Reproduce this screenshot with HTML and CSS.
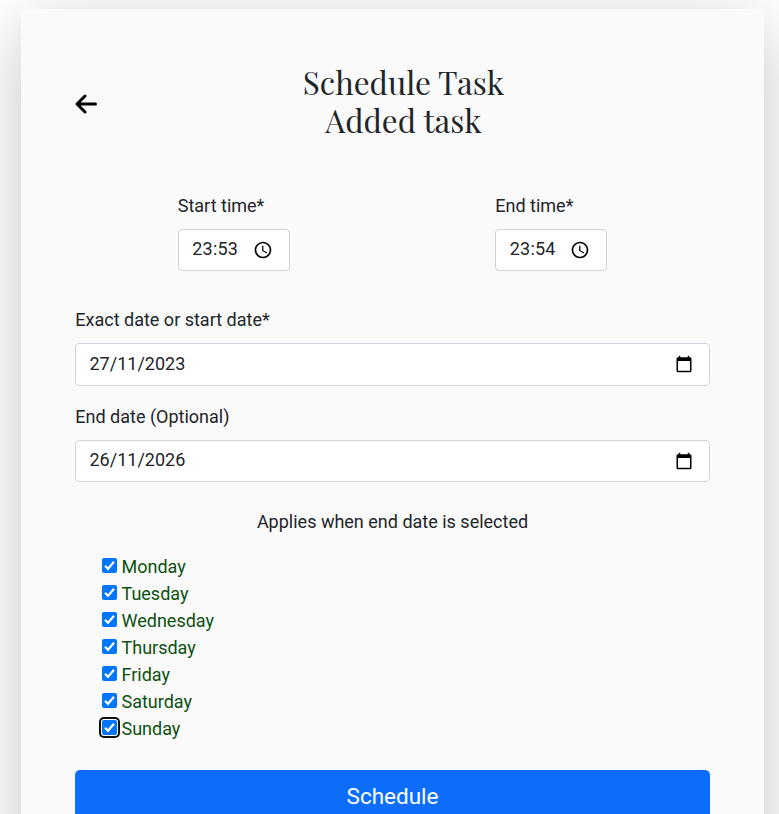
FILE: index.html
```html
<!DOCTYPE html>
<html lang="en">
<head>
<meta charset="utf-8">
<title>Schedule Task</title>
<link rel="stylesheet" href="styles.css">
</head>
<body>
<svg class="defs" aria-hidden="true">
  <symbol id="clock" viewBox="0 0 24 24"><path d="M12 2C6.500 2 2 6.500 2 12s4.500 10 10 10 10-4.500 10-10S17.500 2 12 2zm0 18c-4.400 0-8-3.600-8-8s3.600-8 8-8 8 3.600 8 8-3.600 8-8 8zM12.500 7H11v6l5.250 3.150.75-1.230-4.500-2.670z"/></symbol>
  <symbol id="calendar" viewBox="0 0 24 24"><path d="M20 3h-1V1h-2v2H7V1H5v2H4c-1.100 0-2 .9-2 2v16c0 1.100.9 2 2 2h16c1.100 0 2-.9 2-2V5c0-1.100-.9-2-2-2zm0 18H4V8h16v13z"/></symbol>
  <symbol id="check" viewBox="0 0 15 15"><path d="M3 7.800 6 10.800 12 3.800" fill="none" stroke="#fff" stroke-width="2.200"/></symbol>
</svg>
<main class="card">
  <header class="head">
    <svg class="back" viewBox="0 0 22 20"><path d="M10 2 2 10l8 8M2.500 10h18" fill="none" stroke="#000" stroke-width="3" stroke-linecap="round" stroke-linejoin="round"/></svg>
    <h1 class="title">Schedule Task<br>Added task</h1>
  </header>
  <form>
    <div class="times">
      <div class="time">
        <label>Start time*</label>
        <div class="field"><span>23:53</span><svg class="icon"><use href="#clock"/></svg></div>
      </div>
      <div class="time">
        <label>End time*</label>
        <div class="field"><span>23:54</span><svg class="icon"><use href="#clock"/></svg></div>
      </div>
    </div>
    <div class="date start">
      <label>Exact date or start date*</label>
      <div class="field"><span>27/11/2023</span><svg class="icon cal"><use href="#calendar"/></svg></div>
    </div>
    <div class="date end">
      <label>End date (Optional)</label>
      <div class="field"><span>26/11/2026</span><svg class="icon cal"><use href="#calendar"/></svg></div>
    </div>
    <p class="note">Applies when end date is selected</p>
    <div class="days">
      <div class="day"><svg class="box"><use href="#check"/></svg>Monday</div>
      <div class="day"><svg class="box"><use href="#check"/></svg>Tuesday</div>
      <div class="day"><svg class="box"><use href="#check"/></svg>Wednesday</div>
      <div class="day"><svg class="box"><use href="#check"/></svg>Thursday</div>
      <div class="day"><svg class="box"><use href="#check"/></svg>Friday</div>
      <div class="day"><svg class="box"><use href="#check"/></svg>Saturday</div>
      <div class="day"><svg class="box focus"><use href="#check"/></svg>Sunday</div>
    </div>
    <button class="submit" type="button">Schedule</button>
  </form>
</main>
</body>
</html>
```
FILE: styles.css
```css
* { box-sizing: border-box; }
html { height: 100%; overflow: hidden; }
body {
  display: flow-root;
  margin: 0;
  height: 100%;
  overflow: hidden;
  background: #fff;
  color: #212529;
  font: 18px/27px Roboto, "Liberation Sans", sans-serif;
}
.defs { display: none; }
.card {
  width: 743px;
  height: 900px;
  margin: 9px 0 0 21px;
  padding: 54px 54px 0;
  background: #fafafa;
  box-shadow: 0 18px 66px rgba(0, 0, 0, .23);
}
.head { display: flex; align-items: center; height: 77px; }
.back { width: 22px; height: 20px; margin-top: 4px; }
.title {
  flex: 1;
  margin: 1px 0 0;
  text-align: center;
  font: 400 31.500px/37.800px "Playfair Display", "Liberation Serif", serif;
}
label { display: block; }
.times { display: grid; grid-template-columns: 1fr 1fr; margin-top: 52px; }
.time { width: 112px; justify-self: center; }
.field {
  display: flex;
  align-items: center;
  justify-content: space-between;
  height: 42px;
  margin-top: 10px;
  padding: 0 16px 3px 13.500px;
  border: 1px solid #ced4da;
  border-radius: 4px;
  background: #fff;
}
.time .field span { letter-spacing: .2px; }
.icon { width: 20px; height: 20px; margin-top: 2px; }
.cal { width: 18px; height: 18px; margin-top: 2px; }
.date { margin-top: 17px; }
.date label { padding-left: .3px; }
.date.start { margin-top: 35px; }
.date.start .field { height: 43px; padding-bottom: 2px; }
.date.start .cal { margin-top: 0; }
.note { margin: 26px 0 18px; text-align: center; }
.days { padding-left: 27px; color: #0d500f; }
.day { display: flex; align-items: center; gap: 4.500px; height: 27px; }
.box {
  width: 15px;
  height: 15px;
  margin-top: -3px;
  border-radius: 2px;
  background: #0075ff;
}
.focus { box-shadow: 0 0 0 1px #fff, 0 0 0 3px #101010; }
.submit {
  display: block;
  width: 100%;
  height: 54px;
  margin-top: 28px;
  padding: 0 0 2px;
  border: 0;
  border-radius: 5px;
  background: #0d6efd;
  color: #fff;
  font: 22.500px/34px Roboto, "Liberation Sans", sans-serif;
}
```
